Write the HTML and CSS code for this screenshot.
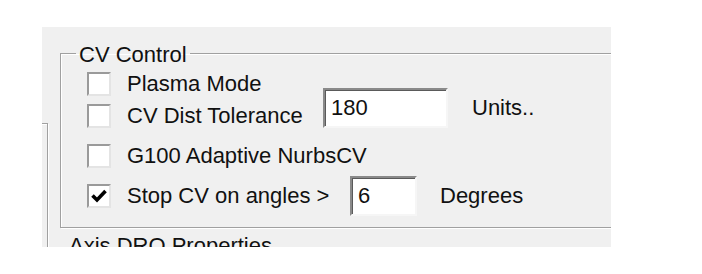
FILE: index.html
```html
<!DOCTYPE html>
<html lang="en">
<head>
    <meta charset="UTF-8">
    <title>CV Control</title>
    <link rel="stylesheet" href="styles.css">
</head>
<body>
    <div class="panel">
        <div class="side">
            <div class="tab-edge"></div>
        </div>
        <div class="main">
            <fieldset class="group">
                <legend>CV Control</legend>
                <div class="row r1">
                    <span class="check"></span>
                    <span class="label">Plasma Mode</span>
                </div>
                <div class="row r2">
                    <span class="check"></span>
                    <span class="label dist">CV Dist Tolerance</span>
                    <span class="field wide">180</span>
                    <span class="unit">Units..</span>
                </div>
                <div class="row r3">
                    <span class="check"></span>
                    <span class="label">G100 Adaptive NurbsCV</span>
                </div>
                <div class="row r4">
                    <span class="check checked">
                        <svg width="16" height="14" viewBox="0 0 16 14"><polyline points="1.5,6.5 6,11 14.5,2" fill="none" stroke="#000" stroke-width="3.6"/></svg>
                    </span>
                    <span class="label angles">Stop CV on angles &gt;</span>
                    <span class="field narrow">6</span>
                    <span class="unit">Degrees</span>
                </div>
            </fieldset>
            <div class="next-title">Axis DRO Properties</div>
        </div>
    </div>
</body>
</html>
```

FILE: styles.css
```css
body {
    margin: 0;
    background: #fff;
    font-family: "Liberation Sans", Arial, sans-serif;
    font-size: 22px;
    line-height: 22px;
    color: #111;
}
.panel {
    margin: 27px 0 0 42px;
    width: 569px;
    height: 220px;
    background: #f0f0f0;
    display: flex;
    overflow: hidden;
}
.side {
    width: 18px;
    flex: none;
}
.tab-edge {
    margin-top: 96px;
    width: 5px;
    height: 200px;
    border-top: 1px solid #a0a0a0;
    border-right: 1px solid #a0a0a0;
    box-shadow: 1px 1px 0 #fff, inset 0 1px 0 #fff;
}
.main {
    flex: none;
    width: 620px;
    padding-top: 13px;
}
.group {
    margin: 0;
    padding: 0 0 11px 26px;
    border: 1px solid #a0a0a0;
    box-shadow: inset 1px 1px 0 #fff, 1px 1px 0 #fff;
}
.group legend {
    margin-left: -11px;
    padding: 4px 3px 0;
}
.row {
    display: flex;
    align-items: center;
}
.r1 {
    margin-top: 6px;
}
.r2 {
    margin-top: -8px;
    align-items: flex-end;
}
.r3 {
    margin-top: 16px;
}
.r4 {
    margin-top: 8px;
}
.check {
    width: 20px;
    height: 20px;
    flex: none;
    background: #fff;
    border: 2px solid;
    border-color: #9a9a9a #e4e4e4 #e4e4e4 #9a9a9a;
    display: flex;
    align-items: center;
    justify-content: center;
}
.label {
    margin-left: 16px;
    line-height: 24px;
}
.dist {
    width: 196px;
}
.angles {
    width: 223px;
}
.field {
    height: 36px;
    background: #fff;
    border: 2px solid;
    border-color: #8a8a8a #f6f6f6 #f6f6f6 #8a8a8a;
    box-shadow: inset 1px 1px 0 #5a5a5a;
    padding-left: 6px;
    display: flex;
    align-items: center;
}
.r2 .field {
    align-self: flex-start;
}
.wide {
    width: 115px;
}
.narrow {
    width: 57px;
}
.unit {
    margin-left: 24px;
}
.r2 .unit {
    align-self: flex-start;
    line-height: 40px;
}
.r4 .unit {
    margin-left: 23px;
}
.next-title {
    margin: 7px 0 0 9px;
}
```
